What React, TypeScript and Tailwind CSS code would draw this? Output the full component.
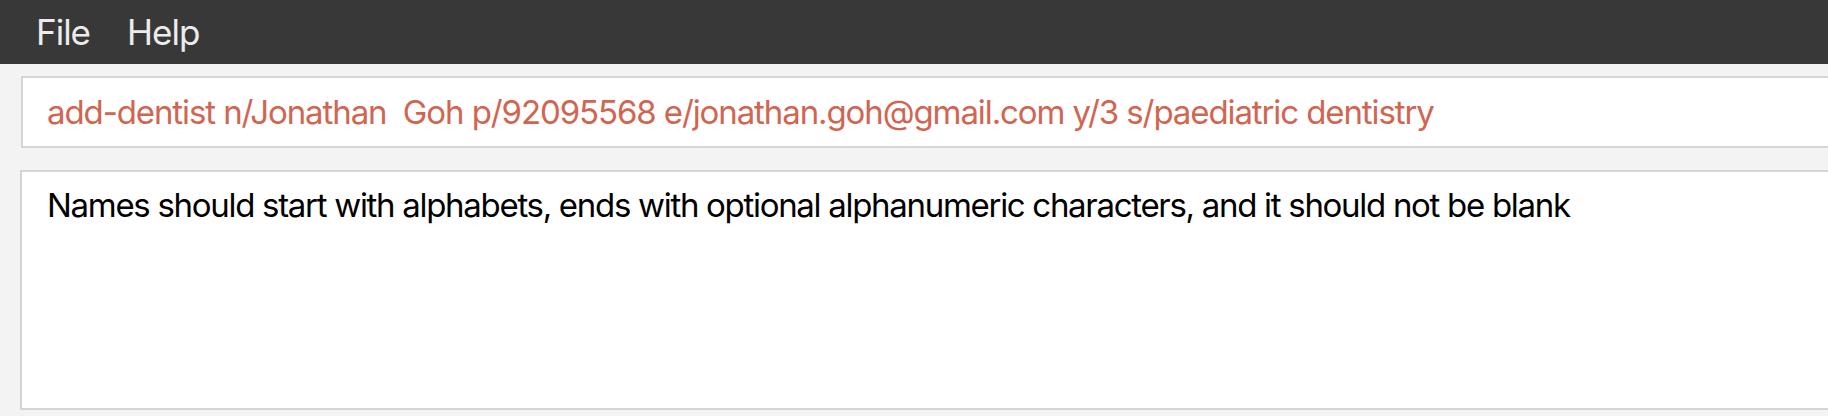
export default function App() {
  const font = { fontFamily: '"Inter", "Noto Sans", sans-serif' };
  return (
    <div className="w-[1828px] h-[416px] bg-[#f3f3f3] overflow-hidden flex flex-col" style={font}>
      <div className="h-[64px] bg-[#383838] flex items-center pl-[36px] gap-[37px] text-[35px] leading-[40px] tracking-[-1px] text-[#ececec]">
        <span>File</span>
        <span>Help</span>
      </div>
      <div className="pl-[21px] pt-[12px]">
        <div className="h-[72px] bg-white border-2 border-r-0 border-[#d5d5d5] pl-[24px] pt-[14px] text-[33px] leading-[40px] tracking-[-1.1px] text-[#d06651] whitespace-pre">
          {"add-dentist n/Jonathan  Goh p/92095568 e/jonathan.goh@gmail.com y/3 s/paediatric dentistry"}
        </div>
      </div>
      <div className="pl-[20px] pt-[22px]">
        <div className="h-[240px] bg-white border-2 border-r-0 border-[#d5d5d5] pl-[25px] pt-[13px] text-[33px] leading-[40px] tracking-[-1.3px] text-black whitespace-pre">
          Names should start with alphabets, ends with optional alphanumeric characters, and it should not be blank
        </div>
      </div>
    </div>
  );
}
